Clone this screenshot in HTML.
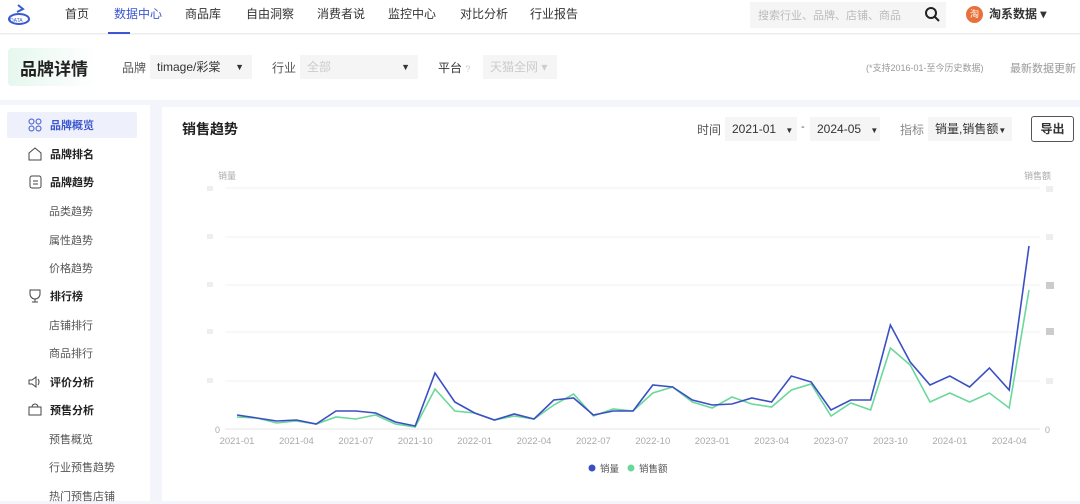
<!DOCTYPE html>
<html><head><meta charset="utf-8"><style>
*{margin:0;padding:0;box-sizing:border-box}
body{width:1080px;height:501px;overflow:hidden;background:#f3f5fb;font-family:"Liberation Sans","Noto Sans CJK SC",sans-serif;color:#333;position:relative}
.top{position:absolute;left:0;top:0;width:1080px;height:34px;background:#fff;border-bottom:1px solid #eee}
.nav{position:absolute;top:5px;font-size:12px;color:#333}
.sec{position:absolute;left:0;top:35px;width:1080px;height:65px;background:#fff}
.side{position:absolute;left:0;top:105px;width:150px;height:396px;background:#fff}
.card{position:absolute;left:162px;top:107px;width:918px;height:394px;background:#fff}
.sel{position:absolute;background:#f5f5f5;font-size:12px;height:24px;line-height:24px;padding-left:7px}
.si{position:absolute;font-size:11px;color:#555}
.sb{position:absolute;font-size:11px;font-weight:bold;color:#222}
</style></head><body>
<div class="top">
<svg style="position:absolute;left:6px;top:3px" width="28" height="26"><path d="M12 2 l5 4 -6 3" stroke="#3a5ad0" fill="none" stroke-width="2"/><ellipse cx="13" cy="16" rx="10" ry="5" fill="none" stroke="#3a5ad0" stroke-width="2"/><text x="4" y="19" font-size="5" fill="#3a5ad0">DATA</text></svg>
<span class="nav" style="left:65px">首页</span>
<span class="nav" style="left:114px;color:#3b56d0">数据中心</span>
<div style="position:absolute;left:108px;top:32px;width:22px;height:2px;background:#3b56d0"></div>
<span class="nav" style="left:185px">商品库</span>
<span class="nav" style="left:246px">自由洞察</span>
<span class="nav" style="left:317px">消费者说</span>
<span class="nav" style="left:388px">监控中心</span>
<span class="nav" style="left:460px">对比分析</span>
<span class="nav" style="left:530px">行业报告</span>
<div style="position:absolute;left:750px;top:2px;width:196px;height:26px;background:#f5f5f5;font-size:11px;color:#bbb;padding:5px 0 0 8px">搜索行业、品牌、店铺、商品</div>
<svg style="position:absolute;left:924px;top:6px" width="16" height="16"><circle cx="7" cy="7" r="5" fill="none" stroke="#222" stroke-width="2"/><path d="M11 11 l4 4" stroke="#222" stroke-width="2"/></svg>
<div style="position:absolute;left:966px;top:6px;width:17px;height:17px;border-radius:50%;background:#e8703a;color:#fff;font-size:9px;text-align:center;line-height:17px">淘</div>
<span class="nav" style="left:989px;font-weight:bold">淘系数据 ▾</span>
</div>
<div class="sec">
<div style="position:absolute;left:8px;top:13px;width:90px;height:38px;background:linear-gradient(90deg,#e6f7ef,#fff);border-radius:4px"></div>
<span style="position:absolute;left:20px;top:20px;font-size:17px;font-weight:bold;color:#222">品牌详情</span>
<span class="si" style="left:122px;top:24px;font-size:12px">品牌</span>
<div class="sel" style="left:150px;top:20px;width:102px">timage/彩棠<span style="position:absolute;right:8px;font-size:9px">▼</span></div>
<span class="si" style="left:272px;top:24px;font-size:12px">行业</span>
<div class="sel" style="left:300px;top:20px;width:118px;color:#ccc">全部<span style="position:absolute;right:8px;font-size:9px;color:#333">▼</span></div>
<span class="si" style="left:438px;top:24px;font-size:12px;color:#333">平台 <span style="color:#ccc;font-size:9px">?</span></span>
<div class="sel" style="left:483px;top:20px;width:74px;color:#ccc">天猫全网 ▾</div>
<span style="position:absolute;left:866px;top:26px;font-size:9px;color:#999">(*支持2016-01-至今历史数据)</span>
<span style="position:absolute;left:1010px;top:25px;font-size:11px;color:#999">最新数据更新</span>
</div>
<div class="side">
<div style="position:absolute;left:7px;top:7px;width:130px;height:26px;background:#eef0fb;border-radius:2px"></div>
<svg style="position:absolute;left:28px;top:13px" width="14" height="14" fill="none" stroke="#3b56d0"><circle cx="3.5" cy="3.5" r="2.5"/><circle cx="10.5" cy="3.5" r="2.5"/><circle cx="3.5" cy="10.5" r="2.5"/><circle cx="10.5" cy="10.5" r="2.5"/></svg>
<span class="sb" style="left:50px;top:12px;color:#3b56d0">品牌概览</span>
<svg style="position:absolute;left:28px;top:42px" width="14" height="14" fill="none" stroke="#444"><path d="M1 6 L7 1 L13 6 V13 H1Z"/></svg>
<span class="sb" style="left:50px;top:41px">品牌排名</span>
<svg style="position:absolute;left:29px;top:70px" width="14" height="14" fill="none" stroke="#444"><rect x="1" y="1" width="11" height="12" rx="2"/><path d="M4 6h5M4 9h5"/></svg>
<span class="sb" style="left:50px;top:69px">品牌趋势</span>
<span class="si" style="left:49px;top:98px">品类趋势</span>
<span class="si" style="left:49px;top:127px">属性趋势</span>
<span class="si" style="left:49px;top:155px">价格趋势</span>
<svg style="position:absolute;left:28px;top:184px" width="14" height="14" fill="none" stroke="#444"><path d="M2 1h10v4a5 5 0 0 1-10 0z M7 10v3 M4 13h6"/></svg>
<span class="sb" style="left:50px;top:183px">排行榜</span>
<span class="si" style="left:49px;top:212px">店铺排行</span>
<span class="si" style="left:49px;top:240px">商品排行</span>
<svg style="position:absolute;left:28px;top:270px" width="14" height="14" fill="none" stroke="#444"><path d="M1 5h3l4-3v10l-4-3H1z M10 4q2 3 0 6"/></svg>
<span class="sb" style="left:50px;top:269px">评价分析</span>
<svg style="position:absolute;left:28px;top:297px" width="14" height="14" fill="none" stroke="#444"><path d="M1 5h12v8H1z M4 5a3 3 0 0 1 6 0"/></svg>
<span class="sb" style="left:50px;top:297px">预售分析</span>
<span class="si" style="left:49px;top:326px">预售概览</span>
<span class="si" style="left:49px;top:354px">行业预售趋势</span>
<span class="si" style="left:49px;top:383px">热门预售店铺</span>
</div>
<div class="card">
<span style="position:absolute;left:20px;top:12px;font-size:14px;font-weight:bold;color:#222">销售趋势</span>
<span class="si" style="left:535px;top:14px;font-size:12px">时间</span>
<div class="sel" style="left:563px;top:10px;width:72px">2021-01 <span style="font-size:8px;margin-left:6px">▼</span></div>
<span class="si" style="left:639px;top:14px">-</span>
<div class="sel" style="left:648px;top:10px;width:70px">2024-05 <span style="font-size:8px;margin-left:6px">▼</span></div>
<span class="si" style="left:738px;top:14px;font-size:12px;color:#888">指标</span>
<div class="sel" style="left:766px;top:10px;width:84px">销量,销售额<span style="font-size:8px">▼</span></div>
<div style="position:absolute;left:869px;top:9px;width:43px;height:26px;border:1px solid #555;border-radius:3px;font-size:12px;text-align:center;line-height:24px;font-weight:bold">导出</div>
</div>
<svg style="position:absolute;left:0;top:0" width="1080" height="501">
<text x="218" y="179" font-size="9" fill="#aaa">销量</text>
<text x="1024" y="179" font-size="9" fill="#aaa">销售额</text>
<g stroke="#f0f0f0"><line x1="225" y1="188" x2="1040" y2="188"/><line x1="225" y1="237" x2="1040" y2="237"/><line x1="225" y1="285" x2="1040" y2="285"/><line x1="225" y1="332" x2="1040" y2="332"/><line x1="225" y1="381" x2="1040" y2="381"/></g>
<line x1="225" y1="429" x2="1040" y2="429" stroke="#e4e4e4"/>
<g fill="#eee"><rect x="207" y="186" width="6" height="5"/><rect x="207" y="234" width="6" height="5"/><rect x="207" y="282" width="6" height="5"/><rect x="207" y="329" width="6" height="5"/><rect x="207" y="378" width="6" height="5"/>
<rect x="1046" y="186" width="7" height="6"/><rect x="1046" y="234" width="7" height="6"/><rect x="1046" y="282" width="8" height="7" fill="#ccc"/><rect x="1046" y="328" width="8" height="7" fill="#ccc"/><rect x="1046" y="378" width="7" height="6"/></g>
<text x="215" y="433" font-size="9" fill="#aaa">0</text><text x="1045" y="433" font-size="9" fill="#aaa">0</text>
<g font-size="9.5" fill="#aaa" text-anchor="middle" id="xl"></g>
<polyline id="g" fill="none" stroke="#6ad89a" stroke-width="1.6"/>
<polyline id="b" fill="none" stroke="#3b4fc4" stroke-width="1.6"/>
<circle cx="592" cy="468" r="3.5" fill="#3b4fc4"/><text x="600" y="472" font-size="9.5" fill="#555">销量</text>
<circle cx="631" cy="468" r="3.5" fill="#6ad89a"/><text x="639" y="472" font-size="9.5" fill="#555">销售额</text>
</svg>
<script>
var B=[415,418,421,420,424,411,411,413,422,426,373,402,413,420,414,419,400,398,415,411,411,385,387,400,405,404,398,402,376,382,410,400,400,325,362,385,376,387,368,390,246];
var G=[417,418,423,421,424,417,419,415,424,427,389,411,413,420,416,419,405,394,416,409,411,393,387,402,408,397,404,407,390,384,416,403,410,348,365,402,393,402,393,408,290];
function p(a){return a.map(function(y,i){return (237+19.8*i).toFixed(1)+","+y}).join(" ")}
document.getElementById("b").setAttribute("points",p(B));
document.getElementById("g").setAttribute("points",p(G));
var L=["2021-01","2021-04","2021-07","2021-10","2022-01","2022-04","2022-07","2022-10","2023-01","2023-04","2023-07","2023-10","2024-01","2024-04"],s="";
L.forEach(function(t,k){s+='<text x="'+(237+19.8*3*k).toFixed(1)+'" y="444">'+t+'</text>'});
document.getElementById("xl").innerHTML=s;
</script>
</body></html>
